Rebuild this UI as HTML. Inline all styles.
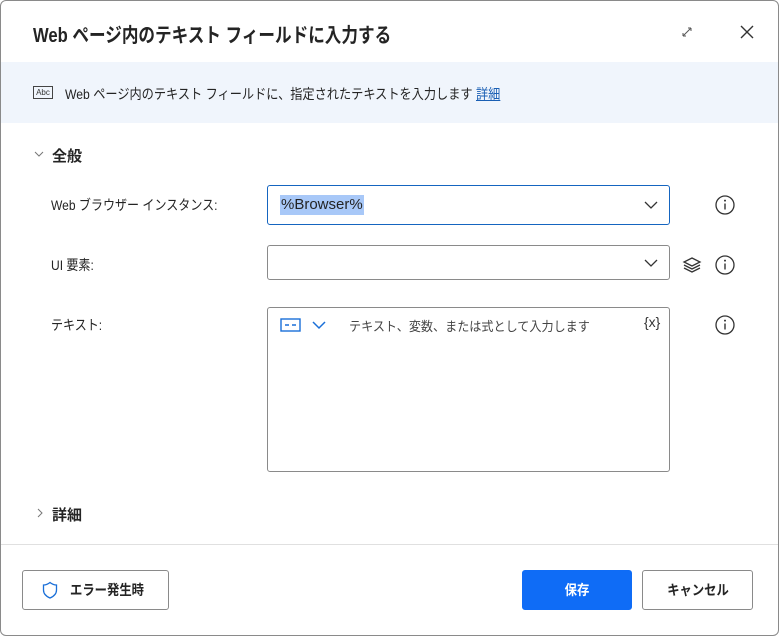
<!DOCTYPE html>
<html><head><meta charset="utf-8"><style>
*{margin:0;padding:0;box-sizing:border-box}
body{width:779px;height:636px;background:#fff;font-family:"Liberation Sans","Noto Sans CJK JP",sans-serif;color:#242424;position:relative;overflow:hidden}
.frame{position:absolute;left:0;top:0;width:779px;height:636px;border:1px solid #8a8a8a;border-radius:6px}
.abs{position:absolute}
.sx{transform-origin:left center;white-space:nowrap}
.title{left:33px;top:19px;font-size:20px;font-weight:bold;color:#242424;transform:scaleX(0.83)}
.band{left:1px;top:62px;width:777px;height:61px;background:#f0f5fc}
.lbl{font-size:14px;color:#242424;transform:scaleX(0.86)}
.inp{border:1px solid #8a8a8a;border-radius:3px;background:#fff}
.btn{border:1px solid #8a8a8a;border-radius:3px;background:#fff;font-size:14px;font-weight:bold;display:flex;align-items:center;justify-content:center}
.btn span{display:inline-block;transform:scaleX(0.88)}
</style></head><body>
<div class="frame"></div>
<div class="abs sx title">Web ページ内のテキスト フィールドに入力する</div>
<svg class="abs" style="left:680px;top:25px" width="14" height="14" viewBox="0 0 14 14"><path d="M3 11L11 3M3 11v-3M3 11h3M11 3h-3M11 3v3" stroke="#555" stroke-width="1" fill="none"/></svg>
<svg class="abs" style="left:739px;top:24px" width="16" height="16" viewBox="0 0 16 16"><path d="M2 2L14 14M14 2L2 14" stroke="#333" stroke-width="1.4"/></svg>
<div class="abs band"></div>
<div class="abs" style="left:33px;top:86px;width:20px;height:13px;border:1px solid #444;font-size:8px;line-height:11px;text-align:center;color:#333">Abc</div>
<div class="abs sx" style="left:65px;top:84px;font-size:14px;transform:scaleX(0.87)">Web ページ内のテキスト フィールドに、指定されたテキストを入力します <span style="color:#1a5fb4;text-decoration:underline">詳細</span></div>
<svg class="abs" style="left:33px;top:148px" width="12" height="12" viewBox="0 0 12 12"><path d="M2 4L6 8L10 4" stroke="#777" fill="none"/></svg>
<div class="abs" style="left:52px;top:145px;font-size:15px;font-weight:bold">全般</div>
<div class="abs sx lbl" style="left:51px;top:195px">Web ブラウザー インスタンス:</div>
<div class="abs sx lbl" style="left:51px;top:255px">UI 要素:</div>
<div class="abs sx lbl" style="left:51px;top:315px">テキスト:</div>
<div class="abs inp" style="left:267px;top:185px;width:403px;height:40px;border-color:#1565c0"></div>
<div class="abs" style="left:280px;top:195px;font-size:15px;background:#a8c8f8;padding:0 1px;line-height:20px">%Browser%</div>
<svg class="abs" style="left:643px;top:198px" width="16" height="14" viewBox="0 0 16 14"><path d="M2 4L8 10L14 4" stroke="#333" stroke-width="1.3" fill="none"/></svg>
<div class="abs inp" style="left:267px;top:245px;width:403px;height:35px"></div>
<svg class="abs" style="left:643px;top:256px" width="16" height="14" viewBox="0 0 16 14"><path d="M2 4L8 10L14 4" stroke="#333" stroke-width="1.3" fill="none"/></svg>
<div class="abs inp" style="left:267px;top:307px;width:403px;height:165px"></div>
<svg class="abs" style="left:280px;top:318px" width="22" height="14" viewBox="0 0 22 14"><rect x="1" y="1" width="19" height="12" fill="none" stroke="#1a6fd8" stroke-width="1.4"/><path d="M5 7h4M12 7h4" stroke="#1a6fd8" stroke-width="1.4"/></svg>
<svg class="abs" style="left:311px;top:319px" width="16" height="12" viewBox="0 0 16 12"><path d="M2 3L8 9L14 3" stroke="#1a6fd8" stroke-width="1.5" fill="none"/></svg>
<div class="abs sx" style="left:349px;top:316px;font-size:13px;color:#444;transform:scaleX(0.93)">テキスト、変数、または式として入力します</div>
<div class="abs" style="left:644px;top:314px;font-size:14px;color:#333">{x}</div>
<svg class="abs" style="left:714px;top:194px" width="22" height="22" viewBox="0 0 22 22"><circle cx="11" cy="11" r="9" stroke="#333" stroke-width="1.3" fill="none"/><path d="M11 9.5v6" stroke="#333" stroke-width="1.4"/><circle cx="11" cy="6.6" r="1" fill="#333"/></svg>
<svg class="abs" style="left:714px;top:254px" width="22" height="22" viewBox="0 0 22 22"><circle cx="11" cy="11" r="9" stroke="#333" stroke-width="1.3" fill="none"/><path d="M11 9.5v6" stroke="#333" stroke-width="1.4"/><circle cx="11" cy="6.6" r="1" fill="#333"/></svg>
<svg class="abs" style="left:714px;top:314px" width="22" height="22" viewBox="0 0 22 22"><circle cx="11" cy="11" r="9" stroke="#333" stroke-width="1.3" fill="none"/><path d="M11 9.5v6" stroke="#333" stroke-width="1.4"/><circle cx="11" cy="6.6" r="1" fill="#333"/></svg>
<svg class="abs" style="left:682px;top:255px" width="20" height="20" viewBox="0 0 20 20"><path d="M10 3L18 7L10 11L2 7Z" fill="none" stroke="#333" stroke-width="1.3"/><path d="M2 10L10 14L18 10M2 13L10 17L18 13" fill="none" stroke="#333" stroke-width="1.3"/></svg>
<svg class="abs" style="left:34px;top:507px" width="12" height="12" viewBox="0 0 12 12"><path d="M4 2L8 6L4 10" stroke="#777" fill="none"/></svg>
<div class="abs" style="left:52px;top:504px;font-size:15px;font-weight:bold">詳細</div>
<div class="abs" style="left:1px;top:544px;width:777px;height:1px;background:#e0e0e0"></div>
<div class="abs btn" style="left:22px;top:570px;width:147px;height:40px"><svg width="16" height="18" viewBox="0 0 16 18" style="margin-right:7px"><path d="M8 1.5C5.5 3.5 3.5 4 1.5 4V9c0 4 3 6.5 6.5 8c3.5-1.5 6.5-4 6.5-8V4C12.5 4 10.5 3.5 8 1.5Z" fill="none" stroke="#1a6fd8" stroke-width="1.3"/></svg><span>エラー発生時</span></div>
<div class="abs btn" style="left:522px;top:570px;width:110px;height:40px;background:#0f6cf6;border-color:#0f6cf6;color:#fff"><span>保存</span></div>
<div class="abs btn" style="left:642px;top:570px;width:111px;height:40px"><span>キャンセル</span></div>
</body></html>
